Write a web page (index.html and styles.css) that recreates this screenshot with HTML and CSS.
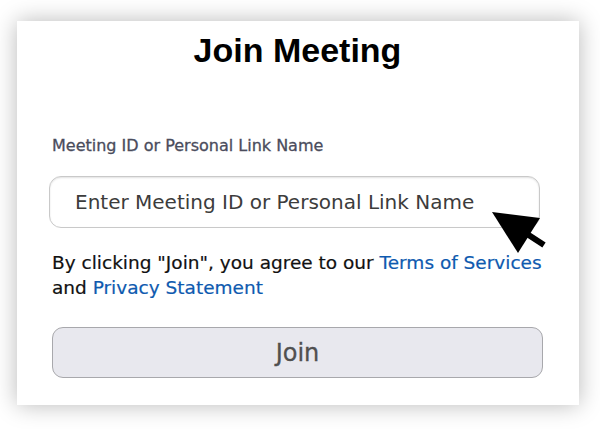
FILE: index.html
```html
<!DOCTYPE html>
<html lang="en">
<head>
  <meta charset="UTF-8">
  <meta name="viewport" content="width=device-width, initial-scale=1">
  <title>Join Meeting</title>
  <link rel="stylesheet" href="styles.css">
</head>
<body>
  <div class="card">
    <h1 class="title">Join Meeting</h1>

    <label class="field-label" for="meetingId">Meeting ID or Personal Link Name</label>
    <div class="field">
      <input type="text" id="meetingId" class="field-input" placeholder="Enter Meeting ID or Personal Link Name">
      <!-- pointer arrow over the input -->
      <svg class="pointer" width="60" height="50" viewBox="0 0 60 50">
        <polygon points="4,4 52,10 30,45" fill="#000"/>
        <line x1="36" y1="24" x2="56" y2="37" stroke="#000" stroke-width="6"/>
      </svg>
    </div>

    <p class="terms">
      By clicking "Join", you agree to our <a href="#">Terms of Services</a>
      and <a href="#">Privacy Statement</a>
    </p>

    <button class="join-btn" type="button">Join</button>
  </div>
</body>
</html>
```

FILE: styles.css
```css
* {
  box-sizing: border-box;
  margin: 0;
  padding: 0;
}
body {
  background: #fff;
  font-family: 'DejaVu Sans', sans-serif;
  padding: 21px 21px 24px 17px;
}
.card {
  width: 562px;
  background: #fff;
  box-shadow: 0 0 22px rgba(0, 0, 0, 0.28);
  padding: 9px 36px 27px 35px;
  display: flex;
  flex-direction: column;
}
.title {
  font-family: 'Liberation Sans', Arial, sans-serif;
  font-size: 34px;
  font-weight: 700;
  line-height: 40px;
  color: #000;
  text-align: center;
}
.field-label {
  margin-top: 66px;
  font-size: 16px;
  line-height: 20px;
  color: #4a4c5c;
  -webkit-text-stroke: 0.3px #4a4c5c;
}
.field {
  position: relative;
  margin-top: 20px;
  margin-left: -3px;
  width: 491px;
}
.field-input {
  display: block;
  width: 100%;
  height: 52px;
  border: 1px solid #c9c9c9;
  border-radius: 12px;
  box-shadow: inset 0 1px 2px rgba(0, 0, 0, 0.12);
  padding: 0 25px;
  font-family: 'DejaVu Sans', sans-serif;
  font-size: 20px;
  color: #333;
  outline: none;
}
.field-input::placeholder {
  color: #3c3c3c;
}
.pointer {
  position: absolute;
  left: 439px;
  top: 32px;
}
.terms {
  margin-top: 22px;
  font-size: 18.5px;
  line-height: 25px;
  color: #111;
  -webkit-text-stroke: 0.2px #111;
}
.terms a {
  color: #0e5aaf;
  -webkit-text-stroke: 0.2px #0e5aaf;
  text-decoration: none;
}
.join-btn {
  margin-top: 27px;
  height: 51px;
  background: #e8e8ee;
  border: 1px solid #a8a8ac;
  border-radius: 11px;
  font-family: 'DejaVu Sans', sans-serif;
  font-size: 24px;
  color: #505050;
  -webkit-text-stroke: 0.3px #505050;
}
```
